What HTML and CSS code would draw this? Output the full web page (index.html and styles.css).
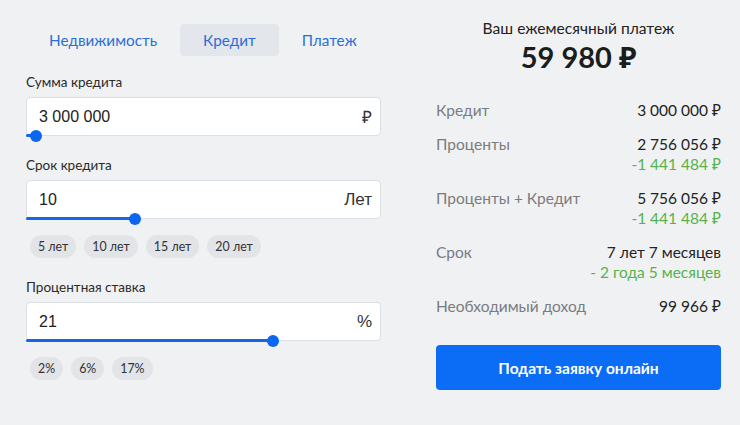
FILE: index.html
```html
<!DOCTYPE html>
<html lang="ru">
<head>
<meta charset="utf-8">
<link rel="stylesheet" href="styles.css">
</head>
<body>
<div class="page">
  <div class="left">
    <div class="tabs">
      <div class="tab">Недвижимость</div>
      <div class="tab active">Кредит</div>
      <div class="tab">Платеж</div>
    </div>

    <div class="field f1">
      <div class="label">Сумма кредита</div>
      <div class="input">
        <span class="value">3 000 000</span>
        <span class="suffix">₽</span>
        <div class="track"><div class="fill" style="width:10px"></div><div class="thumb" style="left:10px"></div></div>
      </div>
    </div>

    <div class="field f2">
      <div class="label">Срок кредита</div>
      <div class="input">
        <span class="value">10</span>
        <span class="suffix">Лет</span>
        <div class="track"><div class="fill" style="width:109px"></div><div class="thumb" style="left:109px"></div></div>
      </div>
      <div class="chips">
        <span class="chip">5 лет</span>
        <span class="chip">10 лет</span>
        <span class="chip">15 лет</span>
        <span class="chip">20 лет</span>
      </div>
    </div>

    <div class="field f3">
      <div class="label">Процентная ставка</div>
      <div class="input">
        <span class="value">21</span>
        <span class="suffix">%</span>
        <div class="track"><div class="fill" style="width:247px"></div><div class="thumb" style="left:247px"></div></div>
      </div>
      <div class="chips">
        <span class="chip">2%</span>
        <span class="chip">6%</span>
        <span class="chip">17%</span>
      </div>
    </div>
  </div>

  <div class="right">
    <div class="summary">
      <div class="sum-title">Ваш ежемесячный платеж</div>
      <div class="sum-value">59 980 ₽</div>
    </div>
    <div class="rows">
      <div class="row"><span class="k">Кредит</span><span class="v">3 000 000 ₽</span></div>
      <div class="row"><span class="k">Проценты</span><span class="v">2 756 056 ₽<span class="g">-1 441 484 ₽</span></span></div>
      <div class="row"><span class="k">Проценты + Кредит</span><span class="v">5 756 056 ₽<span class="g">-1 441 484 ₽</span></span></div>
      <div class="row"><span class="k">Срок</span><span class="v">7 лет 7 месяцев<span class="g">- 2 года 5 месяцев</span></span></div>
      <div class="row"><span class="k">Необходимый доход</span><span class="v">99 966 ₽</span></div>
    </div>
    <button class="btn">Подать заявку онлайн</button>
  </div>
</div>
</body>
</html>
```

FILE: styles.css
```css
* { box-sizing: border-box; }
html, body { margin: 0; padding: 0; }
body {
  background: #f0f1f3;
  font-family: "Lato", "Noto Sans", sans-serif;
  color: #222;
  width: 740px;
  height: 425px;
  overflow: hidden;
}
.page {
  display: flex;
  padding-left: 26px;
  gap: 55px;
}
.left {
  width: 355px;
  display: flex;
  flex-direction: column;
}
.tabs {
  display: flex;
  margin-top: 24px;
  margin-left: 0;
}
.tab {
  height: 32px;
  line-height: 32px;
  padding: 0 23px;
  font-size: 15.3px;
  color: #2b6fd6;
  border-radius: 4px;
}
.tab.active { background: #e3e6ea; }

.label {
  font-size: 13.5px;
  color: #2a2a2a;
  line-height: 16px;
}
.f1 { margin-top: 18px; }
.f2 { margin-top: 21px; }
.f3 { margin-top: 21px; }
.input {
  position: relative;
  margin-top: 7px;
  height: 39px;
  background: #fff;
  border: 1px solid #dcdfe3;
  border-radius: 4px;
  display: flex;
  align-items: center;
  justify-content: space-between;
  padding: 0 8px 0 12px;
}
.value {
  font-family: "Liberation Sans", Arial, sans-serif;
  font-size: 16px;
  color: #222;
}
.suffix {
  font-family: "Liberation Sans", Arial, sans-serif;
  font-size: 17px;
  color: #333;
}
.track {
  position: absolute;
  left: -1px;
  right: -1px;
  bottom: -2px;
  height: 3px;
}
.fill {
  position: absolute;
  left: 0;
  top: 0;
  height: 3px;
  background: #1565e6;
  border-radius: 2px;
}
.thumb {
  position: absolute;
  top: -4.5px;
  width: 12px;
  height: 12px;
  margin-left: -6px;
  border-radius: 50%;
  background: #0d66f0;
}
.chips {
  display: flex;
  gap: 8px;
  margin-top: 16px;
  margin-left: 4px;
}
.chip {
  height: 23px;
  line-height: 23px;
  padding: 0 8px;
  border-radius: 12px;
  background: #e2e4e8;
  font-size: 12.4px;
  color: #333;
}

.right {
  width: 285px;
  display: flex;
  flex-direction: column;
}
.summary {
  text-align: center;
  margin-top: 18px;
}
.sum-title {
  font-size: 15.6px;
  line-height: 20px;
  color: #222;
}
.sum-value {
  font-size: 29px;
  font-weight: 700;
  line-height: 34px;
  margin-top: 2px;
  color: #1c1c1c;
}
.rows {
  margin-top: 26px;
  display: flex;
  flex-direction: column;
  gap: 14px;
}
.row {
  display: flex;
  justify-content: space-between;
  font-size: 15.5px;
  line-height: 20px;
}
.k { color: #7a7c80; }
.v {
  color: #222;
  text-align: right;
  display: flex;
  flex-direction: column;
}
.g { color: #55b34a; }
.btn {
  margin-top: 29px;
  height: 45px;
  width: 285px;
  border: none;
  border-radius: 4px;
  background: #0b6cf6;
  color: #fff;
  font-family: "Lato", "Noto Sans", sans-serif;
  font-weight: 700;
  font-size: 15.5px;
}
```
